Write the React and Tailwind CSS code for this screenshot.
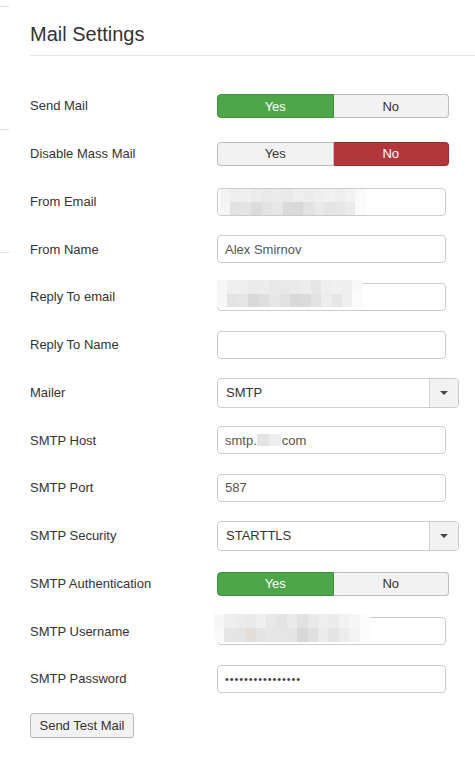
import React from "react";

const FONT = "font-['Liberation_Sans','Helvetica_Neue',Arial,sans-serif]";

const blurA = [
  ["bg-[#f3f3f3]", "bg-[#eeeeee]", "bg-[#f0f0f0]", "bg-[#ececec]", "bg-[#e9e9e9]", "bg-[#ebebeb]", "bg-[#eaeaea]", "bg-[#eeeeee]", "bg-[#ececec]", "bg-[#efefef]", "bg-[#f1f1f1]", "bg-[#eeeeee]", "bg-[#f2f2f2]", "bg-[#fafafa]"],
  ["bg-[#f5f5f5]", "bg-[#e2e2e2]", "bg-[#e4e4e4]", "bg-[#dcdcdc]", "bg-[#e3e3e3]", "bg-[#e6e6e6]", "bg-[#dadada]", "bg-[#d9d9d9]", "bg-[#e2e2e2]", "bg-[#e9e9e9]", "bg-[#e4e4e4]", "bg-[#e7e7e7]", "bg-[#ebebeb]", "bg-[#fbfbfb]"],
];
const blurB = [
  ["bg-[#f6f6f6]", "bg-[#efefef]", "bg-[#eeeeee]", "bg-[#ebebeb]", "bg-[#ececec]", "bg-[#e8e8e8]", "bg-[#e9e9e9]", "bg-[#eaeaea]", "bg-[#ececec]", "bg-[#e6e6e6]", "bg-[#efefef]", "bg-[#f1f1f1]", "bg-[#f0f0f0]", "bg-[#f9f9f9]"],
  ["bg-[#f8f8f8]", "bg-[#e4e4e4]", "bg-[#e6e6e6]", "bg-[#d9d9d9]", "bg-[#dedede]", "bg-[#e7e7e7]", "bg-[#e1e1e1]", "bg-[#d8d8d8]", "bg-[#dadada]", "bg-[#e3e3e3]", "bg-[#ededed]", "bg-[#e6e6e6]", "bg-[#efefef]", "bg-[#fbfbfb]"],
];
const blurC = [
  ["bg-[#f7f7f7]", "bg-[#eeeeee]", "bg-[#ececec]", "bg-[#eaeaea]", "bg-[#f0f0f0]", "bg-[#e8e8e8]", "bg-[#e4e4e4]", "bg-[#eaeaea]", "bg-[#e2e2e2]", "bg-[#e9e9e9]", "bg-[#eeeeee]", "bg-[#ebebeb]", "bg-[#f2f2f2]", "bg-[#f6f6f6]", "bg-[#fcfcfc]"],
  ["bg-[#fafafa]", "bg-[#e6e6e6]", "bg-[#e5e5e5]", "bg-[#e3ded9]", "bg-[#e4e4e4]", "bg-[#e7e7e7]", "bg-[#e6e6e6]", "bg-[#e5e5e5]", "bg-[#d8d8d8]", "bg-[#e0e0e0]", "bg-[#ebebeb]", "bg-[#e4e4e4]", "bg-[#ececec]", "bg-[#f3f3f3]", "bg-[#fcfcfc]"],
];

function Blur({ rows, className }) {
  return (
    <div className={`absolute flex flex-col ${className}`}>
      {rows.map((r, i) => (
        <div key={i} className="flex flex-1">
          {r.map((c, j) => (
            <div key={j} className={`flex-1 ${c}`} />
          ))}
        </div>
      ))}
    </div>
  );
}

function Toggle({ yes }) {
  return (
    <div className="flex w-[232px] h-[24px] text-[13px] leading-none">
      <div
        className={`flex-1 flex items-center justify-center rounded-l-[4px] border ${
          yes
            ? "bg-[#4fa64a] border-[#3e8f3c] text-white"
            : "bg-[#f2f2f2] border-[#bdbdbd] text-[#333333]"
        }`}
      >
        Yes
      </div>
      <div
        className={`flex-1 flex items-center justify-center rounded-r-[4px] border ${
          yes
            ? "border-l-0 bg-[#f2f2f2] border-[#bdbdbd] text-[#333333]"
            : "border-l-0 bg-[#b3363a] border-[#9b2b2e] text-white"
        }`}
      >
        No
      </div>
    </div>
  );
}

function Input({ children }) {
  return (
    <div className="relative flex items-center w-[229px] h-[28px] border border-[#cccccc] rounded-[4px] bg-white pl-[7px] text-[13px] text-[#555555]">
      {children}
    </div>
  );
}

function Select({ value }) {
  return (
    <div className="flex w-[242px] h-[30px] border border-[#cccccc] rounded-[4px] bg-white text-[13px] text-[#333333]">
      <div className="flex-1 flex items-center pl-[8px]">{value}</div>
      <div className="w-[29px] flex items-center justify-center border-l border-[#d5d5d5] bg-[#f2f2f2] rounded-r-[4px]">
        <div className="w-0 h-0 border-l-[4px] border-r-[4px] border-t-[4px] border-l-transparent border-r-transparent border-t-[#444444]" />
      </div>
    </div>
  );
}

function Row({ label, children }) {
  return (
    <div className="flex items-center h-[28px] mb-[19.75px]">
      <div className="w-[187px] text-[13px] text-[#333333]">{label}</div>
      {children}
    </div>
  );
}

export default function App() {
  return (
    <div className={`flex w-[475px] h-[761px] bg-white overflow-hidden ${FONT}`}>
      <div className="w-[9px] shrink-0 flex flex-col">
        <div className="mt-[6px] h-px bg-[#dddddd]" />
        <div className="mt-[122px] h-px bg-[#dddddd]" />
        <div className="mt-[122px] h-px bg-[#dddddd]" />
      </div>
      <div className="flex-1 pl-[21px]">
        <div className="pt-[22px] pb-[9px] border-b border-[#e5e5e5] text-[20px] leading-[24px] text-[#333333]">
          Mail Settings
        </div>
        <div className="mt-[36px]">
          <Row label="Send Mail">
            <Toggle yes />
          </Row>
          <Row label="Disable Mass Mail">
            <Toggle yes={false} />
          </Row>
          <Row label="From Email">
            <Input>
              <Blur rows={blurA} className="left-[2px] top-0 w-[146px] h-[26px]" />
            </Input>
          </Row>
          <Row label="From Name">
            <Input>Alex Smirnov</Input>
          </Row>
          <Row label="Reply To email">
            <Input>
              <Blur rows={blurB} className="left-[-1px] top-[-4px] w-[146px] h-[27px]" />
            </Input>
          </Row>
          <Row label="Reply To Name">
            <Input />
          </Row>
          <Row label="Mailer">
            <Select value="SMTP" />
          </Row>
          <Row label="SMTP Host">
            <Input>
              <span>smtp.</span>
              <span className="flex w-[24px] h-[12px] mr-px">
                <span className="flex-1 bg-[#e4e4e4]" />
                <span className="flex-1 bg-[#ededed]" />
              </span>
              <span>com</span>
            </Input>
          </Row>
          <Row label="SMTP Port">
            <Input>587</Input>
          </Row>
          <Row label="SMTP Security">
            <Select value="STARTTLS" />
          </Row>
          <Row label="SMTP Authentication">
            <Toggle yes />
          </Row>
          <Row label="SMTP Username">
            <Input>
              <Blur rows={blurC} className="left-[-4px] top-[-4px] w-[156px] h-[28px]" />
            </Input>
          </Row>
          <Row label="SMTP Password">
            <Input>
              <span className="text-[11px] tracking-[0.9px] text-[#444444]">••••••••••••••••</span>
            </Input>
          </Row>
          <button className="mt-[-1px] w-[104px] h-[25px] border border-[#bbbbbb] rounded-[3px] bg-[#f2f2f2] text-[13px] text-[#333333] shadow-[0_1px_1px_rgba(0,0,0,0.05)]">
            Send Test Mail
          </button>
        </div>
      </div>
    </div>
  );
}
